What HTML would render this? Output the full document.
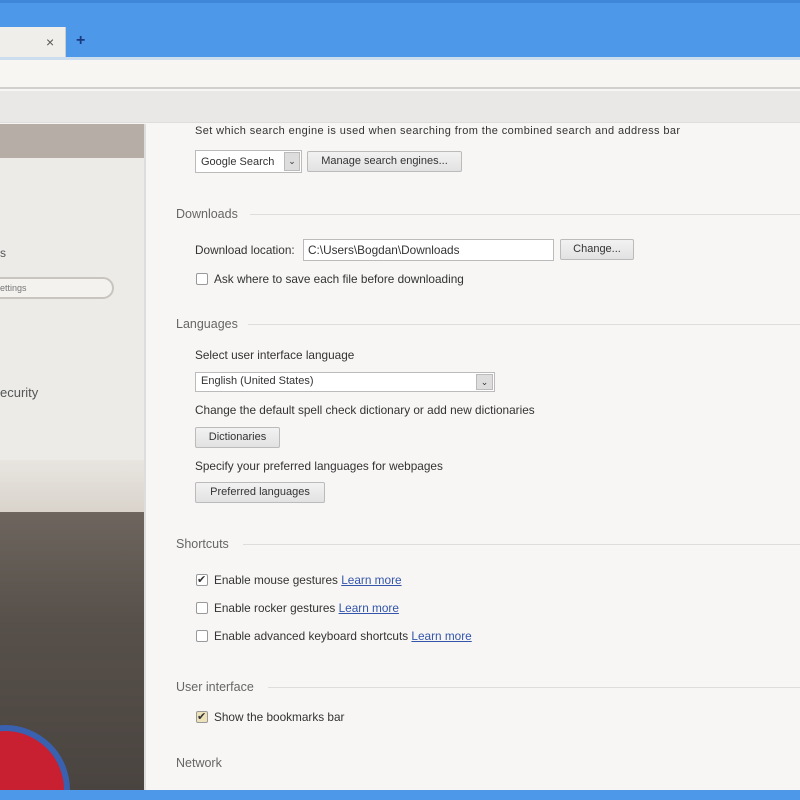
<!DOCTYPE html>
<html><head><style>
*{margin:0;padding:0;box-sizing:border-box}
body{width:800px;height:800px;overflow:hidden;position:relative;background:#f7f6f4;font-family:"Liberation Sans",sans-serif;font-size:11px;color:#333}
.a{position:absolute}
.sec{position:absolute;left:176px;font-size:12.5px;color:#666}
.line{position:absolute;height:1px;background:#ddd;right:0}
.btn{position:absolute;height:21px;border:1px solid #bbb;background:linear-gradient(#f2f2f2,#e2e2e2);font-size:11px;line-height:19px;padding:0 8px;color:#333;border-radius:2px;text-align:center}
.cb{position:absolute;width:12px;height:12px;border:1px solid #999;background:#fff;border-radius:2px}
.t{position:absolute;font-size:11.8px;color:#333;white-space:nowrap}
.lk{color:#3355aa;text-decoration:underline}
</style></head><body>
<div class="a" style="left:0;top:0;width:800px;height:58px;background:#4e98ea;border-top:3px solid #3d86d8"></div>
<div class="a" style="left:0;top:27px;width:66px;height:31px;background:#f0eeea;border-right:1px solid #ccc"></div>
<div class="t" style="left:46px;top:34px;font-size:14px;color:#555">×</div>
<div class="t" style="left:76px;top:32px;font-size:16px;font-weight:bold;color:#1a3a80">+</div>
<div class="a" style="left:0;top:57px;width:800px;height:3px;background:#cde"></div>
<div class="a" style="left:0;top:60px;width:800px;height:29px;background:#f7f6f3;border-bottom:2px solid #d2d0cc"></div>
<div class="a" style="left:0;top:91px;width:800px;height:32px;background:#e9e8e6;border-bottom:1px solid #ddd"></div>
<!-- left panel -->
<div class="a" style="left:0;top:124px;width:145px;height:666px;overflow:hidden">
<div class="a" style="left:0;top:0;width:145px;height:34px;background:#b5ada6"></div>
<div class="a" style="left:0;top:34px;width:145px;height:302px;background:#ecebe8;border-right:1px solid #ccc"></div>
<div class="a" style="left:0;top:336px;width:145px;height:56px;background:linear-gradient(#e8e5e0,#d8d2ca)"></div>
<div class="a" style="left:0;top:388px;width:145px;height:280px;background:linear-gradient(#6d655e,#57504a 40%,#4a4440)"></div>
<div class="a" style="left:-60px;top:601px;width:130px;height:130px;border-radius:50%;background:#c82030;border:6px solid #3a60b0"></div>
<div class="t" style="left:0;top:122px;font-size:12px;color:#555">s</div>
<div class="a" style="left:-20px;top:153px;width:134px;height:22px;border:2px solid #c8c4be;border-radius:11px;background:#f3f2ef"></div>
<div class="t" style="left:0;top:159px;font-size:9px;color:#777">ettings</div>
<div class="t" style="left:0;top:261px;font-size:13px;color:#555">ecurity</div>
</div>
<div class="a" style="left:144px;top:124px;width:2px;height:666px;background:#ddd"></div>
<!-- content -->
<div class="t" style="left:195px;top:125px;font-size:11px;letter-spacing:0.4px">Set which search engine is used when searching from the combined search and address bar</div>
<div class="a" style="left:195px;top:150px;width:107px;height:23px;border:1px solid #bbb;background:#fff"></div>
<div class="t" style="left:201px;top:156px;font-size:11px">Google Search</div>
<div class="a" style="left:284px;top:152px;width:16px;height:19px;background:#ddd;border:1px solid #bbb;font-size:9px;text-align:center;line-height:17px">⌄</div>
<div class="btn" style="left:307px;top:151px;width:155px">Manage search engines...</div>
<div class="sec" style="top:207px">Downloads</div><div class="line" style="left:250px;top:214px"></div>
<div class="t" style="left:195px;top:243px">Download location:</div>
<div class="a" style="left:303px;top:239px;width:251px;height:22px;border:1px solid #bbb;background:#fff"></div>
<div class="t" style="left:308px;top:243px">C:\Users\Bogdan\Downloads</div>
<div class="btn" style="left:560px;top:239px;width:74px">Change...</div>
<div class="cb" style="left:196px;top:273px"></div>
<div class="t" style="left:214px;top:272px">Ask where to save each file before downloading</div>
<div class="sec" style="top:317px">Languages</div><div class="line" style="left:248px;top:324px"></div>
<div class="t" style="left:195px;top:348px">Select user interface language</div>
<div class="a" style="left:195px;top:372px;width:300px;height:20px;border:1px solid #bbb;background:#fff"></div>
<div class="t" style="left:201px;top:375px;font-size:11px">English (United States)</div>
<div class="a" style="left:476px;top:374px;width:17px;height:16px;background:#ddd;border:1px solid #bbb;font-size:9px;text-align:center;line-height:14px">⌄</div>
<div class="t" style="left:195px;top:403px">Change the default spell check dictionary or add new dictionaries</div>
<div class="btn" style="left:195px;top:427px;width:85px">Dictionaries</div>
<div class="t" style="left:195px;top:459px">Specify your preferred languages for webpages</div>
<div class="btn" style="left:195px;top:482px;width:130px">Preferred languages</div>
<div class="sec" style="top:537px">Shortcuts</div><div class="line" style="left:243px;top:544px"></div>
<div class="cb" style="left:196px;top:574px;font-size:11px;line-height:10px">✔</div>
<div class="t" style="left:214px;top:573px">Enable mouse gestures <span class="lk">Learn more</span></div>
<div class="cb" style="left:196px;top:602px"></div>
<div class="t" style="left:214px;top:601px">Enable rocker gestures <span class="lk">Learn more</span></div>
<div class="cb" style="left:196px;top:630px"></div>
<div class="t" style="left:214px;top:629px">Enable advanced keyboard shortcuts <span class="lk">Learn more</span></div>
<div class="sec" style="top:680px">User interface</div><div class="line" style="left:268px;top:687px"></div>
<div class="cb" style="left:196px;top:711px;background:#eee2b8;font-size:11px;line-height:10px">✔</div>
<div class="t" style="left:214px;top:710px">Show the bookmarks bar</div>
<div class="sec" style="top:756px">Network</div>
<div class="a" style="left:0;top:790px;width:800px;height:10px;background:#4e98ea"></div>
</body></html>
